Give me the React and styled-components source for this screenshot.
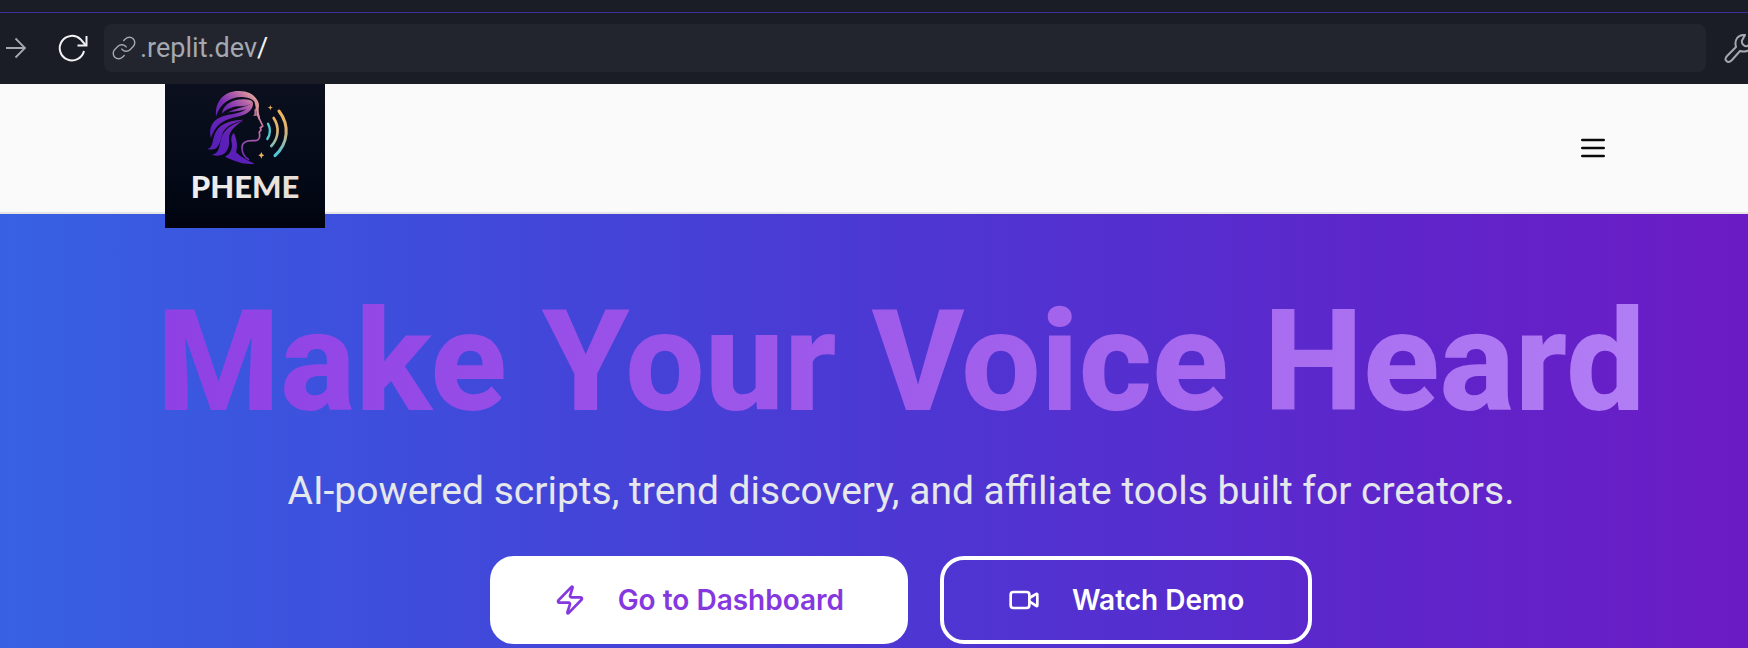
import React from 'react';
import styled, { createGlobalStyle } from 'styled-components';
import { Link as LinkIcon, Video, Zap } from 'lucide-react';

const GlobalStyle = createGlobalStyle`
  *, *::before, *::after { box-sizing: border-box; }
  body {
    margin: 0;
    font-family: Inter, "Liberation Sans", sans-serif;
    background: #fafafa;
  }
  button, input { font: inherit; }
  svg { flex: none; }
`;

const Page = styled.div`
  display: flex;
  flex-direction: column;
  min-height: 100vh;
  overflow: hidden;
`;

const WindowEdge = styled.div`
  height: 13px;
  background: #1a1d25;
  border-bottom: 1px solid #3e2f9a;
`;

const BrowserBar = styled.div`
  display: flex;
  align-items: center;
  height: 71px;
  padding: 0 0 1px 4px;
  background: #1a1d25;
  color: #a5a8b1;
`;

const BarButton = styled.button`
  display: flex;
  flex: none;
  padding: 0;
  margin-right: ${({ $after }) => $after}px;
  border: 0;
  background: none;
  color: ${({ $bright }) => ($bright ? '#f1f2f5' : 'inherit')};
`;

const ToolButton = styled(BarButton)`
  width: 24px;
  overflow: hidden;
`;

const AddressBox = styled.div`
  display: flex;
  flex: 1;
  align-items: center;
  height: 48px;
  margin-right: 18px;
  padding: 0 7px;
  border-radius: 8px;
  background: #22252e;
  font-family: Roboto, "Liberation Sans", sans-serif;
  font-size: 27px;
  line-height: 32px;
`;

const Host = styled.label`
  margin-left: 3px;
`;

const PathInput = styled.input`
  flex: 1;
  min-width: 0;
  padding: 0;
  border: 0;
  outline: 0;
  background: none;
  color: #f4f5f7;
`;

const Header = styled.header`
  display: flex;
  justify-content: space-between;
  align-items: center;
  height: 130px;
  padding: 0 139px 0 165px;
  border-bottom: 2px solid #e5e5e5;
  background: #fafafa;
`;

const LogoLink = styled.a`
  position: relative;
  z-index: 1;
  align-self: flex-start;
  height: 128px;
`;

const MenuButton = styled.button`
  display: flex;
  padding: 0;
  border: 0;
  background: none;
  color: #0a0a0a;
`;

const Hero = styled.main`
  display: flex;
  flex: 1;
  flex-direction: column;
  align-items: center;
  padding: 74px 108px 4px 162px;
  background: linear-gradient(90deg, #3761e3 0%, #3f4bdb 25%, #4c38d3 50%, #5c27cb 77%, #6c1bc4 100%);
`;

const Title = styled.h1`
  margin: 0;
  font-family: Roboto, "Liberation Sans", sans-serif;
  font-size: 141px;
  font-weight: 800;
  line-height: 148px;
  white-space: nowrap;
  color: transparent;
  background: linear-gradient(to right, #8f40e4, #9f5ceb 50%, #b17df4);
  background-clip: text;
  -webkit-background-clip: text;
`;

const Subtitle = styled.p`
  margin: 28px 0 38px;
  font-family: Roboto, "Liberation Sans", sans-serif;
  font-size: 39px;
  line-height: 54px;
  color: #e5e7eb;
`;

const Actions = styled.div`
  display: flex;
  gap: 32px;
`;

const ActionButton = styled.button`
  display: flex;
  align-items: center;
  gap: 32px;
  height: 88px;
  padding: 0 64px;
  border: ${({ $outlined }) => ($outlined ? '4px solid #ffffff' : '0')};
  border-radius: 24px;
  background: ${({ $outlined }) => ($outlined ? 'transparent' : '#ffffff')};
  color: ${({ $outlined }) => ($outlined ? '#ffffff' : '#8638df')};
  font-size: 28px;
  font-weight: 600;
  line-height: 40px;
`;

function ForwardIcon() {
  return (
    <svg width="24" height="24" viewBox="0 0 24 24" fill="none" stroke="currentColor" strokeWidth="1.8" aria-hidden="true">
      <path d="M2 12H21M11.500 2.500L21 12L11.500 21.500" />
    </svg>
  );
}

function ReloadIcon() {
  return (
    <svg width="32" height="32" viewBox="0 0 32 32" fill="none" stroke="currentColor" strokeWidth="2" aria-hidden="true">
      <path d="M28 19A12.300 12.300 0 1 1 24.500 7.200L29.500 13" />
      <path d="M30.500 4V13.500H21.500" />
    </svg>
  );
}

function WrenchIcon() {
  return (
    <svg width="36" height="32" viewBox="0 0 36 32" fill="none" stroke="currentColor" strokeWidth="2" strokeLinejoin="round" aria-hidden="true">
      <path d="M21 3C14 2 10 8 12 15L3.500 23.500C1 26 1 28 2.500 29C4 30.500 6 30 8 28L16 19C24 21 30 16 29 9L23.500 14C21 15 17 12 18 8.500Z" />
    </svg>
  );
}

function MenuIcon() {
  return (
    <svg width="32" height="32" viewBox="0 0 24 24" fill="none" stroke="currentColor" strokeWidth="2" strokeLinecap="round" aria-hidden="true">
      <path d="M4 6H20M4 12H20M4 18H20" />
    </svg>
  );
}

function PhemeLogo() {
  return (
    <svg width="160" height="144" viewBox="0 0 160 144" role="img" aria-label="Pheme">
      <defs>
        <linearGradient id="night" x1="0" y1="0" x2="0" y2="1">
          <stop offset="0" stopColor="#0c101e" />
          <stop offset="0.600" stopColor="#040a18" />
          <stop offset="1" stopColor="#01040f" />
        </linearGradient>
        <linearGradient id="hair" gradientUnits="userSpaceOnUse" x1="210" y1="190" x2="325" y2="70">
          <stop offset="0" stopColor="#5a1fb8" />
          <stop offset="0.500" stopColor="#7429b4" />
          <stop offset="0.800" stopColor="#b765a7" />
          <stop offset="1" stopColor="#e0a09a" />
        </linearGradient>
        <linearGradient id="face" gradientUnits="userSpaceOnUse" x1="320" y1="75" x2="285" y2="250">
          <stop offset="0" stopColor="#dd9c9b" />
          <stop offset="0.500" stopColor="#c66faf" />
          <stop offset="1" stopColor="#6424b8" />
        </linearGradient>
        <linearGradient id="wave" gradientUnits="userSpaceOnUse" x1="0" y1="110" x2="0" y2="235">
          <stop offset="0" stopColor="#f0b75c" />
          <stop offset="0.450" stopColor="#dcb377" />
          <stop offset="1" stopColor="#4cc7da" />
        </linearGradient>
        <linearGradient id="word" x1="0" y1="0" x2="1" y2="0">
          <stop offset="0" stopColor="#efeff1" />
          <stop offset="1" stopColor="#e9ded5" />
        </linearGradient>
      </defs>
      <rect width="160" height="144" fill="url(#night)" />
      <g transform="scale(.3333) translate(-45 -24)">
        <g fill="url(#hair)">
          <path d="M198 121C194 73 226 44 266 45C304 44 327 66 326 94C319 78 308 69 292 65C251 57 213 76 198 121Z" />
          <path d="M216 113C218 87 249 69 282 70C296 70 306 73 309 79C291 96 270 87 248 94C235 98 224 104 216 113Z" />
          <path d="M233 110C256 95 286 97 309 79C311 103 290 117 263 122C222 129 195 146 183 186C173 151 191 128 224 119C246 113 274 112 290 98C271 107 252 104 233 110Z" />
          <path d="M172 219C192 215 185 187 199 165C213 140 247 132 282 131C250 140 223 151 216 177C209 203 204 228 172 219Z" />
          <path d="M185 236C210 232 207 211 213 189C220 159 248 143 279 134C249 153 235 170 237 193C240 224 221 248 185 236Z" />
          <path d="M225 242C245 232 249 211 244 194C243 184 246 177 251 170C260 187 264 209 258 229C272 242 293 255 314 263C281 267 254 255 225 242Z" />
        </g>
        <path d="M310 66C324 68 329 81 326 99C325 113 332 128 327 132C317 116 320 94 310 66Z" fill="#dc9899" />
        <path d="M309 119C319 113 308 103 317 96L321 119Z" fill="#c472a4" />
        <path d="M325 116C326 132 338 143 338 151L331 155L333 162L328 168L329 179C329 190 323 195 311 194C287 193 276 200 276 215C276 231 284 244 297 251" fill="none" stroke="url(#face)" strokeWidth="5" />
        <g fill="none" stroke="url(#wave)" strokeLinecap="round">
          <path d="M354 143C363 160 362 174 352 189" stroke="#55c7d5" strokeWidth="7" />
          <path d="M371 126C389 153 386 187 364 210" strokeWidth="8" />
          <path d="M387 105C419 147 416 201 375 239" strokeWidth="9" />
        </g>
        <g fill="#eab660">
          <path d="M361 87L363 93L369 95L363 97L361 103L359 97L353 95L359 93Z" />
          <path d="M334 228L337 235L343 238L337 241L334 248L331 241L325 238L331 235Z" />
        </g>
      </g>
      <text x="80" y="114" textAnchor="middle" fontFamily="Lato, sans-serif" fontSize="31" fontWeight="900" fill="url(#word)">
        PHEME
      </text>
    </svg>
  );
}

export default function App() {
  return (
    <Page>
      <GlobalStyle />
      <WindowEdge />
      <BrowserBar>
        <BarButton aria-label="Forward" $after={28}>
          <ForwardIcon />
        </BarButton>
        <BarButton aria-label="Reload" $bright $after={16}>
          <ReloadIcon />
        </BarButton>
        <AddressBox>
          <LinkIcon size={26} strokeWidth={1.3} aria-hidden="true" />
          <Host htmlFor="path">.replit.dev</Host>
          <PathInput id="path" type="text" defaultValue="/" />
        </AddressBox>
        <ToolButton aria-label="Developer tools" $after={0}>
          <WrenchIcon />
        </ToolButton>
      </BrowserBar>
      <Header>
        <LogoLink href="/">
          <PhemeLogo />
        </LogoLink>
        <MenuButton aria-label="Open menu">
          <MenuIcon />
        </MenuButton>
      </Header>
      <Hero>
        <Title>Make Your Voice Heard</Title>
        <Subtitle>AI-powered scripts, trend discovery, and affiliate tools built for creators.</Subtitle>
        <Actions>
          <ActionButton>
            <Zap size={32} aria-hidden="true" />
            Go to Dashboard
          </ActionButton>
          <ActionButton $outlined>
            <Video size={32} aria-hidden="true" />
            Watch Demo
          </ActionButton>
        </Actions>
      </Hero>
    </Page>
  );
}
